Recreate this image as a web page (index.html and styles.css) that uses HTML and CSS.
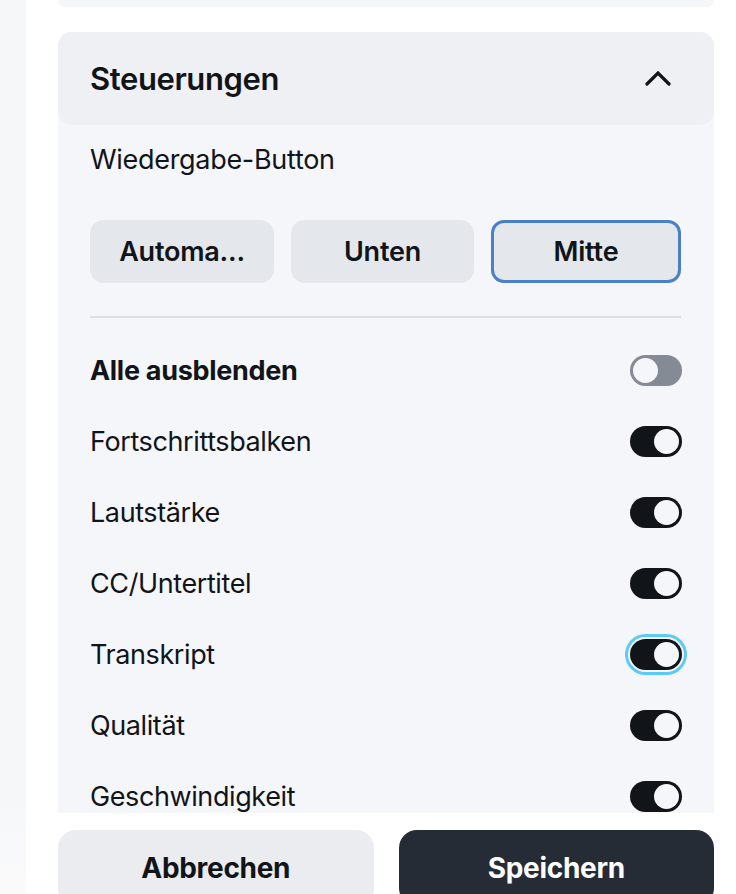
FILE: index.html
```html
<!DOCTYPE html>
<html lang="de">
<head>
<meta charset="utf-8">
<title>Steuerungen</title>
<link rel="stylesheet" href="styles.css">
</head>
<body>
<div class="sidebar"></div>
<div class="main">
  <div class="scroll">
    <div class="top-card"></div>
    <section class="section">
      <div class="section-header">
        <h2 class="section-title">Steuerungen</h2>
        <svg class="chevron" width="26" height="16" viewBox="0 0 26 16"><path d="M2 13 L13 2 L24 13" fill="none" stroke="#111418" stroke-width="3.2" stroke-linecap="round" stroke-linejoin="miter"/></svg>
      </div>
      <div class="section-body">
        <div class="label">Wiedergabe-Button</div>
        <div class="seg">
          <button class="seg-btn">Automa...</button>
          <button class="seg-btn">Unten</button>
          <button class="seg-btn active">Mitte</button>
        </div>
        <hr class="divider">
        <div class="rows">
          <div class="row"><span class="row-label bold">Alle ausblenden</span><span class="toggle off"><span class="knob"></span></span></div>
          <div class="row"><span class="row-label">Fortschrittsbalken</span><span class="toggle"><span class="knob"></span></span></div>
          <div class="row"><span class="row-label">Lautstärke</span><span class="toggle"><span class="knob"></span></span></div>
          <div class="row"><span class="row-label">CC/Untertitel</span><span class="toggle"><span class="knob"></span></span></div>
          <div class="row"><span class="row-label">Transkript</span><span class="toggle focus"><span class="knob"></span></span></div>
          <div class="row"><span class="row-label">Qualität</span><span class="toggle"><span class="knob"></span></span></div>
          <div class="row"><span class="row-label">Geschwindigkeit</span><span class="toggle"><span class="knob"></span></span></div>
        </div>
      </div>
    </section>
  </div>
  <div class="footer">
    <button class="btn cancel">Abbrechen</button>
    <button class="btn save">Speichern</button>
  </div>
</div>
</body>
</html>
```
FILE: styles.css
```css
* { box-sizing: border-box; }
html, body { margin: 0; padding: 0; }
body {
  display: flex;
  height: 894px;
  overflow: hidden;
  background: #ffffff;
  font-family: Inter, "Noto Sans", "Liberation Sans", sans-serif;
  color: #111418;
}
.sidebar {
  width: 26px;
  flex: none;
  background: linear-gradient(to bottom, #f6f7f9 0%, #f6f7f9 88%, #fafafb 100%);
}
.main {
  flex: 1;
  display: flex;
  flex-direction: column;
  min-width: 0;
  background: #ffffff;
}
.scroll {
  height: 813px;
  flex: none;
  overflow: hidden;
  padding: 0 22px 0 32px;
}
.top-card {
  height: 7px;
  background: #f5f6fa;
  border-radius: 0 0 14px 14px;
}
.section {
  margin-top: 25px;
  background: #f5f6fa;
  border-radius: 14px;
}
.section-header {
  height: 93px;
  background: #eef0f4;
  border-radius: 14px;
  display: flex;
  align-items: center;
  justify-content: space-between;
  padding: 0 43px 0 32px;
}
.section-title {
  margin: 0;
  font-size: 31px;
  line-height: 36px;
  font-weight: 600;
  letter-spacing: -0.4px;
}
.chevron { display: block; margin-top: 1px; }
.section-body {
  padding: 22px 33px 0 32px;
}
.label {
  font-size: 27px;
  line-height: 26px;
  letter-spacing: -0.3px;
}
.seg {
  margin-top: 47px;
  display: grid;
  grid-template-columns: 184px 183px 1fr;
  gap: 17px;
}
.seg-btn {
  height: 63px;
  border: none;
  border-radius: 14px;
  background: #e4e7ec;
  font-family: inherit;
  font-size: 27px;
  font-weight: 600;
  color: #111418;
  letter-spacing: -0.2px;
  padding: 0 4px;
  white-space: nowrap;
}
.seg-btn.active {
  border: 3px solid #4a80c8;
  border-radius: 13px;
}
.divider {
  margin: 33px 0 0;
  border: none;
  height: 2px;
  background: #dde0e6;
}
.rows { padding-top: 17px; }
.row {
  height: 71px;
  display: flex;
  align-items: center;
  justify-content: space-between;
}
.row-label {
  font-size: 27px;
  letter-spacing: -0.4px;
}
.row-label.bold { font-weight: 700; letter-spacing: -0.3px; }
.toggle {
  width: 52px;
  height: 31px;
  border-radius: 16px;
  background: #111418;
  padding: 3px;
  display: flex;
  justify-content: flex-end;
  margin-right: -1px;
}
.toggle.off {
  background: #858b95;
  justify-content: flex-start;
}
.knob {
  width: 25px;
  height: 25px;
  border-radius: 50%;
  background: #f5f6fa;
}
.toggle.focus {
  box-shadow: 0 0 0 2px #f5f6fa, 0 0 0 5px #5ccaf6;
}
.footer {
  flex: none;
  display: flex;
  gap: 25px;
  padding: 17px 22px 0 32px;
  background: #ffffff;
}
.btn {
  flex: 1;
  height: 76px;
  border: none;
  border-radius: 18px;
  font-family: inherit;
  font-size: 28px;
  font-weight: 700;
  letter-spacing: -0.3px;
}
.btn.cancel { background: #ebecf0; color: #111418; }
.btn.save { background: #262c35; color: #ffffff; }
```
